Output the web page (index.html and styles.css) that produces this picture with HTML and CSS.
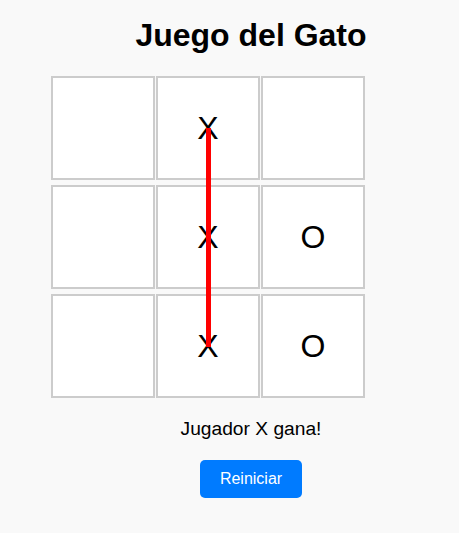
FILE: index.html
```html
<!DOCTYPE html>
<html lang="es">
<head>
    <meta charset="UTF-8">
    <meta name="viewport" content="width=device-width, initial-scale=1.0">
    <title>Juego del Gato</title>
    <link rel="stylesheet" href="styles.css">
</head>
<body>
    <div class="game">
        <h1>Juego del Gato</h1>

        <div class="board-wrap">
            <div class="board">
                <div class="cell"></div>
                <div class="cell">X</div>
                <div class="cell"></div>
                <div class="cell"></div>
                <div class="cell">X</div>
                <div class="cell">O</div>
                <div class="cell"></div>
                <div class="cell">X</div>
                <div class="cell">O</div>
            </div>
            <div class="win-line"></div>
        </div>

        <p class="status">Jugador X gana!</p>

        <button class="reset">Reiniciar</button>
    </div>
</body>
</html>
```

FILE: styles.css
```css
body {
    font-family: "Liberation Sans", Arial, sans-serif;
    background-color: #f9f9f9;
    margin: 0;
}
.game {
    padding-left: 43px;
    text-align: center;
}
h1 {
    font-size: 32px;
    margin: 17px 0 22px;
    color: #000;
}
.board-wrap {
    position: relative;
    width: 400px;
    margin: 0 auto;
}
.board {
    display: grid;
    grid-template-columns: repeat(3, 100px);
    gap: 5px;
}
.cell {
    width: 100px;
    height: 100px;
    border: 2px solid #ccc;
    background-color: #fff;
    display: flex;
    align-items: center;
    justify-content: center;
    font-size: 32px;
}
.win-line {
    position: absolute;
    left: 155px;
    top: 52px;
    width: 5px;
    height: 219px;
    background-color: red;
}
.status {
    font-size: 1.2em;
    margin: 20px 0 20px;
}
.reset {
    background-color: #007bff;
    color: #fff;
    border: none;
    border-radius: 5px;
    padding: 10px 20px;
    font-family: "Liberation Sans", Arial, sans-serif;
    font-size: 16px;
    cursor: pointer;
}
```
